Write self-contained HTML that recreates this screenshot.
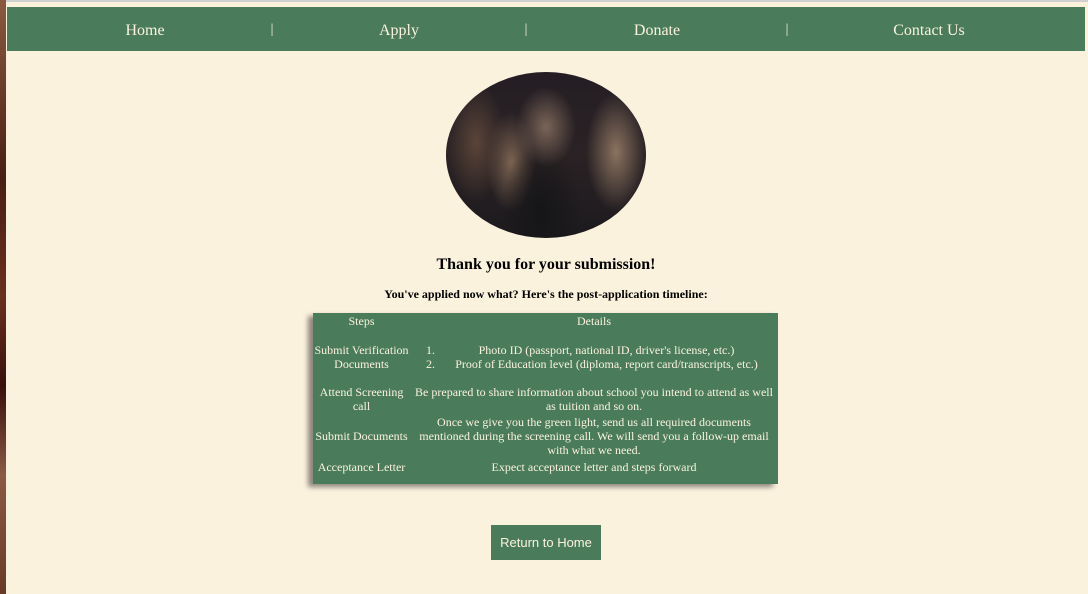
<!DOCTYPE html>
<html><head><meta charset="utf-8"><style>
*{margin:0;padding:0;box-sizing:border-box}
html,body{width:1088px;height:594px;overflow:hidden}
body{background:#fbf2de;font-family:"Liberation Serif",serif;position:relative}
.strip{position:absolute;left:0;top:0;width:6px;height:594px;background:linear-gradient(#8a5a40,#4a1e12 30%,#6a3020 50%,#3a100a 65%,#8a5a45 80%,#6a3a28)}
.topbar{position:absolute;left:6px;top:0;width:1082px;height:2px;background:#cfcfcf}
nav{position:absolute;left:7px;top:7px;width:1078px;height:44px;background:#4a7c5c;color:#fbf2de;font-size:16px}
nav span{position:absolute;top:15px;transform:translateX(-50%);white-space:nowrap}
nav span.s{font-size:14px;top:15px}
.img{position:absolute;left:446px;top:72px;width:200px;height:166px;border-radius:50%;overflow:hidden;
background:radial-gradient(ellipse 30px 40px at 100px 55px,#7a6458,transparent),radial-gradient(ellipse 40px 70px at 95px 140px,#151517,transparent),radial-gradient(ellipse 30px 60px at 170px 80px,#8a7260,transparent),radial-gradient(ellipse 30px 60px at 30px 70px,#5a4438,transparent),radial-gradient(ellipse 25px 50px at 65px 90px,#7a6250,transparent),linear-gradient(#241e24,#2a2224 50%,#1c1a1e)}
h1{position:absolute;left:0;width:1092px;top:256px;text-align:center;font-size:16px;font-weight:bold;color:#000}
h2{position:absolute;left:0;width:1092px;top:287px;text-align:center;font-size:12px;font-weight:bold;color:#000}
.tbl{position:absolute;left:313px;top:313px;width:465px;height:171px;background:#4a7c5c;box-shadow:-5px 3px 5px rgba(0,0,0,.45);color:#fbf2de;font-size:12px;line-height:14px}
.tbl div{position:absolute;text-align:center;white-space:nowrap}
.c1{left:0;width:97px}
.c2{left:97px;width:368px}
.btn{position:absolute;left:491px;top:525px;width:110px;height:35px;background:#4a7c5c;color:#fbf2de;font-family:"Liberation Sans",sans-serif;font-size:13px;text-align:center;line-height:35px}
</style></head><body>
<div class="strip"></div><div class="topbar"></div>
<nav><span style="left:138px">Home</span><span class="s" style="left:265px">|</span><span style="left:392px">Apply</span><span class="s" style="left:519px">|</span><span style="left:650px">Donate</span><span class="s" style="left:780px">|</span><span style="left:922px">Contact Us</span></nav>
<div class="img"></div>
<h1>Thank you for your submission!</h1>
<h2>You've applied now what? Here's the post-application timeline:</h2>
<div class="tbl">
<div class="c1" style="top:1px">Steps</div><div class="c2" style="top:1px">Details</div>
<div class="c1" style="top:30px">Submit Verification<br>Documents</div>
<div style="left:113px;top:30px;text-align:left">1.<br>2.</div>
<div style="top:30px;left:130px;width:327px">Photo ID (passport, national ID, driver's license, etc.)<br>Proof of Education level (diploma, report card/transcripts, etc.)</div>
<div class="c1" style="top:72px">Attend Screening<br>call</div>
<div class="c2" style="top:72px">Be prepared to share information about school you intend to attend as well<br>as tuition and so on.</div>
<div class="c1" style="top:116px">Submit Documents</div>
<div class="c2" style="top:102px">Once we give you the green light, send us all required documents<br>mentioned during the screening call. We will send you a follow-up email<br>with what we need.</div>
<div class="c1" style="top:147px">Acceptance Letter</div>
<div class="c2" style="top:147px">Expect acceptance letter and steps forward</div>
</div>
<div class="btn">Return to Home</div>
</body></html>
